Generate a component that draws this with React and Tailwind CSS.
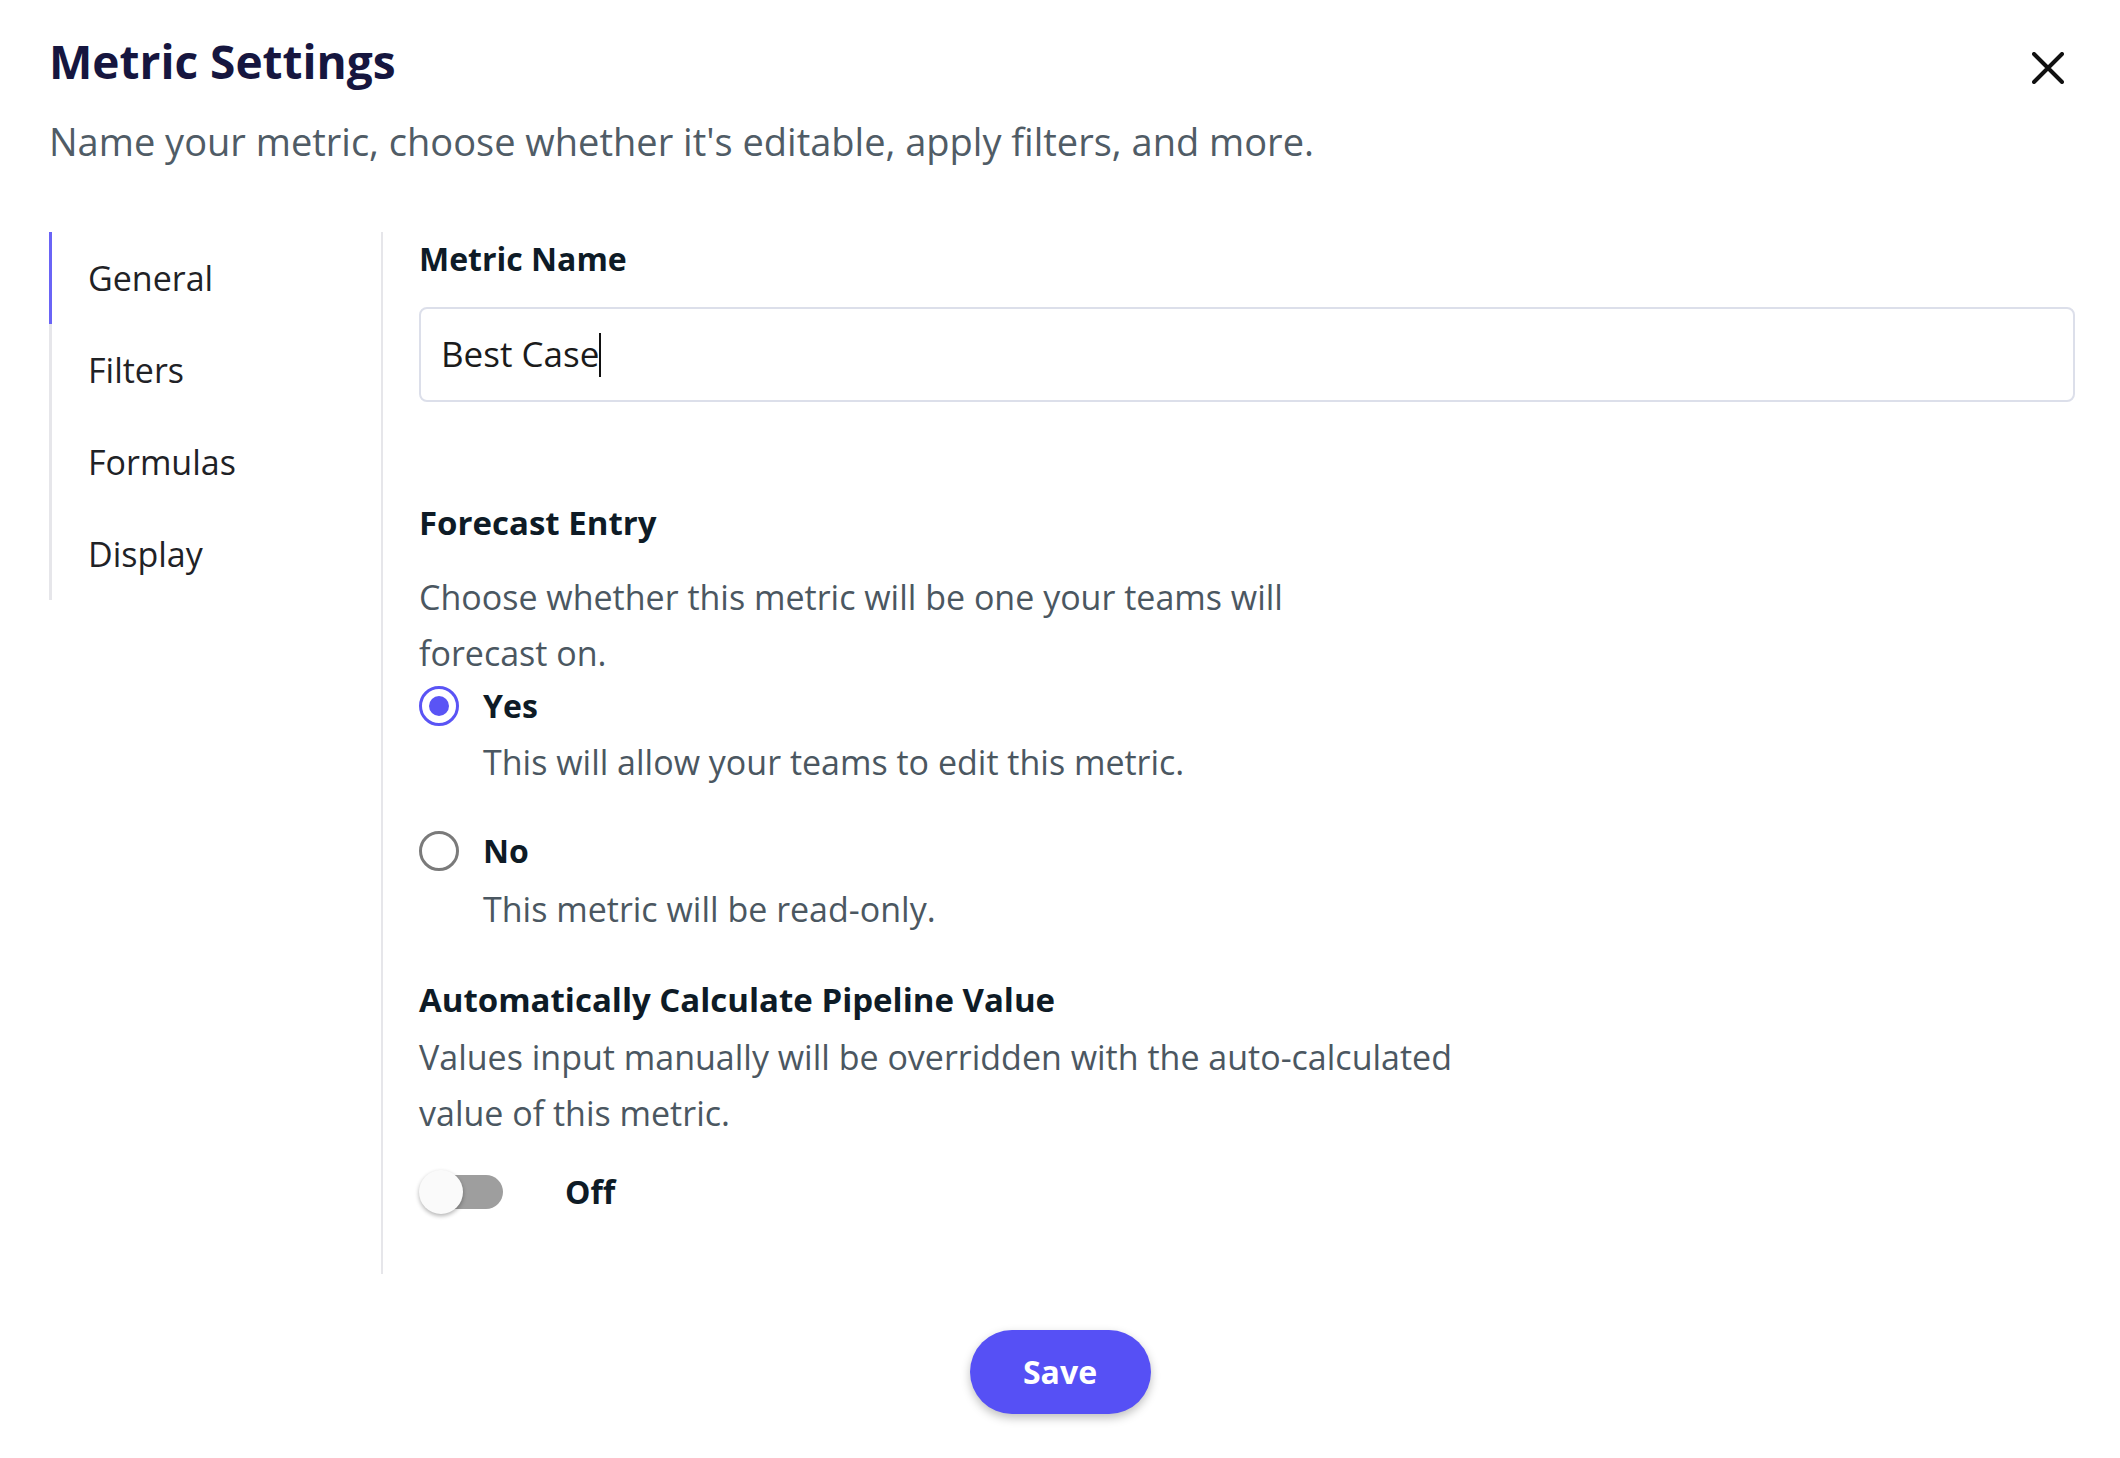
import React, { useState } from 'react';

const Radio = ({ checked }) => (
  <span
    className={`w-[40px] h-[40px] rounded-full border-[3px] flex items-center justify-center shrink-0 ${
      checked ? 'border-[#5a54f5]' : 'border-[#7a7a7a]'
    }`}
  >
    {checked && <span className="w-[20px] h-[20px] rounded-full bg-[#5a54f5]"></span>}
  </span>
);

export default function App() {
  const [entry, setEntry] = useState('yes');
  const navItems = ['General', 'Filters', 'Formulas', 'Display'];

  return (
    <div className="w-[2120px] h-[1458px] bg-white relative font-['Open_Sans',sans-serif]">
      {/* Close */}
      <button className="absolute top-[52px] left-[2032px] w-[32px] h-[32px]">
        <svg viewBox="0 0 32 32" className="w-[32px] h-[32px]">
          <path d="M2 2 30 30M30 2 2 30" stroke="#111" strokeWidth="4" strokeLinecap="round" />
        </svg>
      </button>

      {/* Header */}
      <div className="pl-[49px] pt-[32px]">
        <h1 className="text-[46px] leading-[58px] font-bold text-[#16163f]">Metric Settings</h1>
        <p className="mt-[26px] text-[38px] leading-[50px] text-[#505c66]">
          Name your metric, choose whether it's editable, apply filters, and more.
        </p>
      </div>

      {/* Body */}
      <div className="flex mt-[66px] pl-[49px]">
        <div className="w-[332px] shrink-0">
          <div className="border-l-[3px] border-[#e6e6ea]">
            {navItems.map((item, i) => (
              <div
                key={item}
                className={`h-[92px] flex items-center pl-[36px] -ml-[3px] border-l-[3px] text-[34px] text-[#1f2226] ${
                  i === 0 ? 'border-[#6a64f6]' : 'border-transparent'
                }`}
              >
                {item}
              </div>
            ))}
          </div>
        </div>

        <div className="border-l-2 border-[#e6e6ea] pl-[36px] pb-[60px] w-[1694px]">
          <div className="mt-[7px] text-[32px] leading-[40px] font-bold text-[#0e1b26]">Metric Name</div>
          <div className="mt-[28px] h-[95px] border-2 border-[#dcdfea] rounded-[8px] flex items-center pl-[20px] text-[35px] text-[#1b1b1b]">
            <span>Best Case</span>
            <span className="w-[2px] h-[44px] bg-[#111]"></span>
          </div>

          <div className="mt-[101px] text-[33px] leading-[40px] font-bold text-[#0e1b26]">Forecast Entry</div>
          <p className="mt-[26px] w-[900px] text-[34px] leading-[56px] text-[#4b5761]">
            Choose whether this metric will be one your teams will forecast on.
          </p>

          <div className="mt-[5px] h-[40px] flex items-center gap-[24px] cursor-pointer" onClick={() => setEntry('yes')}>
            <Radio checked={entry === 'yes'} />
            <span className="text-[32px] font-bold text-[#0e1b26]">Yes</span>
          </div>
          <p className="mt-[9px] pl-[64px] text-[34px] leading-[55px] text-[#4b5761]">
            This will allow your teams to edit this metric.
          </p>

          <div className="mt-[41px] h-[40px] flex items-center gap-[24px] cursor-pointer" onClick={() => setEntry('no')}>
            <Radio checked={entry === 'no'} />
            <span className="text-[32px] font-bold text-[#0e1b26]">No</span>
          </div>
          <p className="mt-[11px] pl-[64px] text-[34px] leading-[55px] text-[#4b5761]">
            This metric will be read-only.
          </p>

          <div className="mt-[43px] text-[33px] leading-[40px] font-bold text-[#0e1b26]">
            Automatically Calculate Pipeline Value
          </div>
          <p className="mt-[9px] w-[1080px] text-[34px] leading-[56px] text-[#4b5761]">
            Values input manually will be overridden with the auto-calculated value of this metric.
          </p>

          <div className="mt-[29px] h-[44px] flex items-center">
            <div className="relative w-[84px] h-[44px] flex items-center">
              <div className="ml-[3px] w-[81px] h-[34px] rounded-full bg-[#9e9e9e]"></div>
              <div className="absolute left-0 top-0 w-[44px] h-[44px] rounded-full bg-[#fafafa] shadow-[0_2px_4px_rgba(0,0,0,0.3)]"></div>
            </div>
            <span className="ml-[62px] text-[32px] font-bold text-[#0e1b26]">Off</span>
          </div>
        </div>
      </div>

      <div className="flex justify-center mt-[56px]">
        <button className="w-[181px] h-[84px] rounded-full bg-[#5650f5] text-white text-[32px] font-bold shadow-[0_4px_10px_rgba(0,0,0,0.25)]">
          Save
        </button>
      </div>
    </div>
  );
}
